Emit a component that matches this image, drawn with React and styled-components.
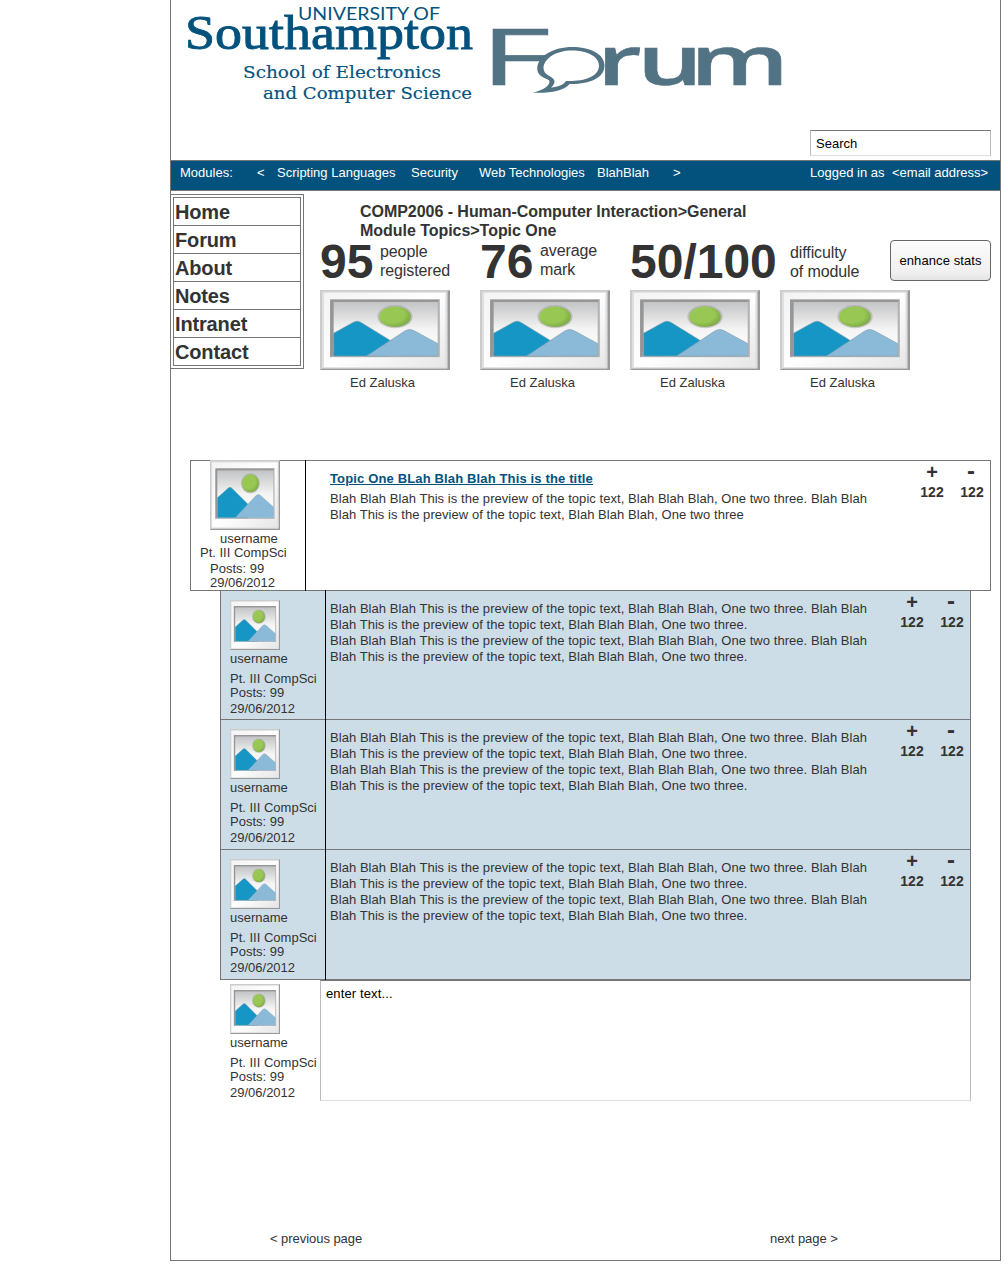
import React from 'react';
import styled, { createGlobalStyle } from 'styled-components';

const GlobalStyle = createGlobalStyle`
  * { box-sizing: border-box; }
  body {
    margin: 0;
    background: #fff;
    color: #333;
    font: 13px/16px "Liberation Sans", Arial, sans-serif;
  }
`;

const LINE = '#767676';
const NAVY = '#03527d';

const Page = styled.div`
  margin-left: 170px;
  width: 831px;
  height: 1261px;
  border: 1px solid ${LINE};
  border-top: 0;
  display: flex;
  flex-direction: column;
`;

const Header = styled.header`
  height: 160px;
  display: flex;
  justify-content: space-between;
  padding-right: 9px;
`;

const Brand = styled.svg`
  display: block;
  width: 630px;
  height: 110px;
`;

const SearchBox = styled.input`
  align-self: flex-end;
  margin-bottom: 4px;
  width: 181px;
  height: 26px;
  padding: 1px 5px 0;
  border: 1px solid #bbb;
  border-top-color: ${LINE};
  border-bottom-color: #ddd;
  background: #fff;
  color: #000;
  font: inherit;
  outline: 0;
  &::placeholder { color: #000; opacity: 1; }
`;

const ModuleBar = styled.nav`
  height: 31px;
  border: solid ${LINE};
  border-width: 1px 0;
  background: ${NAVY};
  color: #fff;
  display: grid;
  grid-template-columns: 77px 20px 134px 68px 118px 76px 137px 82px 1fr;
  padding: 4px 0 0 9px;
  white-space: nowrap;
`;

const Intro = styled.section`
  display: flex;
  height: 269px;
`;

const Menu = styled.div`
  margin: 3px 0 0 -1px;
  width: 134px;
  height: 175px;
  border: 1px solid ${LINE};
  padding: 2px;
`;

const MenuList = styled.ul`
  list-style: none;
  margin: 0;
  padding: 0;
  width: 128px;
  border: 1px solid ${LINE};
`;

const MenuItem = styled.li`
  height: 28px;
  padding-left: 1px;
  border-bottom: 1px solid ${LINE};
  font-size: 20px;
  line-height: 28px;
  font-weight: bold;
  letter-spacing: -0.15px;
  &:last-child { border-bottom: 0; height: 27px; }
`;

const Overview = styled.div`
  margin-left: 16px;
  width: 671px;
`;

const Heading = styled.h1`
  margin: 11px 0 0 40px;
  width: 400px;
  height: 38px;
  font-size: 16px;
  line-height: 19px;
  letter-spacing: -0.04px;
`;

const Stats = styled.div`
  display: grid;
  grid-template-columns: 60px 100px 60px 90px 160px 100px 101px;
  height: 50px;
`;

const Figure = styled.strong`
  font-size: 48px;
  line-height: 44px;
`;

const FigureLabel = styled.span`
  font-size: 16px;
  line-height: 19px;
  letter-spacing: -0.1px;
  padding-top: ${(p) => p.$drop || 0}px;
`;

const StatsButton = styled.button`
  width: 101px;
  height: 41px;
  padding: 0;
  border: 1px solid #666;
  border-radius: 4px;
  background: linear-gradient(#fcfcfc, #f0f0f0 80%, #e4e4e4);
  color: #000;
  font: inherit;
  letter-spacing: 0.08px;
`;

const Staff = styled.div`
  display: grid;
  grid-template-columns: 160px 150px 150px 130px;
`;

const StaffCard = styled.figure`
  margin: 0;
  figcaption { padding: 5px 0 0 30px; }
`;

const Frame = styled.svg`
  display: block;
  width: ${(p) => p.$w}px;
  height: ${(p) => p.$h}px;
`;

const Topic = styled.article`
  margin-left: 19px;
  width: 801px;
  height: 131px;
  border: 1px solid ${LINE};
  display: flex;
`;

const TopicAuthor = styled.div`
  width: 115px;
  margin: -1px 0;
  border-right: 1px solid #000;
  padding-left: 19px;
`;

const Reply = styled.article`
  margin-left: 49px;
  width: 751px;
  height: ${(p) => p.$h}px;
  border: 1px solid ${LINE};
  border-top: 0;
  background: #ccdde7;
  display: flex;
`;

const ReplyAuthor = styled.div`
  width: 105px;
  margin: -1px 0;
  border-right: 1px solid #000;
  padding: 10px 0 0 9px;
`;

const Line = styled.div`
  height: ${(p) => p.$h || 14}px;
  line-height: ${(p) => p.$h || 14}px;
  margin-top: ${(p) => p.$top || 0}px;
  margin-left: ${(p) => p.$left || 0}px;
  white-space: nowrap;
`;

const Content = styled.div`
  width: ${(p) => p.$w}px;
  padding: ${(p) => p.$top}px 0 0 ${(p) => p.$left}px;
`;

const Title = styled.a`
  display: block;
  margin-bottom: 4px;
  color: ${NAVY};
  font-weight: bold;
  letter-spacing: 0.145px;
  text-decoration: underline;
`;

const Text = styled.div`
  letter-spacing: 0.05px;
  white-space: nowrap;
`;

const Votes = styled.div`
  display: flex;
  gap: 16px;
  padding-top: 1px;
  font-weight: bold;
  font-size: 14px;
`;

const Vote = styled.div`
  width: 24px;
  text-align: center;
`;

const VoteSign = styled.div`
  height: 22px;
  line-height: ${(p) => p.$line}px;
  font-size: ${(p) => p.$size}px;
  text-indent: ${(p) => p.$indent || 0}px;
`;

const Compose = styled.div`
  display: flex;
  margin-left: 59px;
`;

const ComposeAuthor = styled.div`
  width: 90px;
  padding-top: 4px;
`;

const Editor = styled.textarea`
  width: 651px;
  height: 121px;
  padding: 5px;
  border: 1px solid #bbb;
  border-top-color: ${LINE};
  border-bottom-color: #ddd;
  color: #000;
  background: #fff;
  font: inherit;
  letter-spacing: 0.13px;
  resize: none;
  outline: 0;
  &::placeholder { color: #000; opacity: 1; }
`;

const Pager = styled.footer`
  display: grid;
  grid-template-columns: 500px 200px;
  margin: auto 0 13px 99px;
  letter-spacing: -0.05px;
`;

function Picture({ w, h }) {
  return (
    <Frame $w={w} $h={h} viewBox="0 0 100 100" preserveAspectRatio="none" aria-hidden="true">
      <defs>
        <linearGradient id="sky" x2="0" y2="1">
          <stop offset="0" stopColor="#c3c4c6" />
          <stop offset=".5" stopColor="#f4f4f4" />
          <stop offset="1" stopColor="#fff" />
        </linearGradient>
        <linearGradient id="mat" x2="1" y2="1">
          <stop offset="0" stopColor="#f3f3f3" />
          <stop offset=".5" stopColor="#fff" />
          <stop offset="1" stopColor="#e6e6e6" />
        </linearGradient>
        <radialGradient id="sun" cx=".4" cy=".4" r=".65">
          <stop offset=".6" stopColor="#98c853" />
          <stop offset="1" stopColor="#7da648" />
        </radialGradient>
      </defs>
      <rect width="100" height="100" fill="#cbcbcb" />
      <path d="M100 0V100H0L2 98H98V2Z" fill="#999" />
      <rect x="1.5" y="2" width="96.5" height="96" fill="#dedede" />
      <rect x="3" y="3.5" width="93.5" height="93" fill="url(#mat)" />
      <rect x="7.8" y="12" width="84.4" height="72" fill="#b4b4b4" />
      <path d="M7.8 84V12H92.2L90 15.5H11V81Z" fill="#969696" />
      <rect x="10.5" y="15" width="80" height="67.5" fill="url(#sky)" />
      <ellipse cx="57.7" cy="33.3" rx="13.6" ry="14.5" fill="#999" opacity=".45" />
      <ellipse cx="57.7" cy="33.3" rx="12.2" ry="12.8" fill="url(#sun)" />
      <path d="M10.5 54L25 41Q28.5 37 32 41L54 63V82.5H10.5Z" fill="#1596c4" stroke="#7c9aa7" strokeWidth=".6" />
      <path d="M36 82.5L65.5 51Q69 47.5 72.5 51L90.5 67V82.5Z" fill="#8bbad8" stroke="#8ba5b5" strokeWidth=".7" />
    </Frame>
  );
}

function Logos() {
  return (
    <Brand viewBox="171 0 630 110" role="img" aria-label="University of Southampton Forum">
      <g fill={NAVY}>
        <text x="298" y="19.5" fontFamily="Lato, sans-serif" fontSize="17" textLength="142" lengthAdjust="spacingAndGlyphs">UNIVERSITY OF</text>
        <text x="185" y="48.5" fontFamily="Liberation Serif, serif" fontSize="49" stroke={NAVY} strokeWidth="0.9" textLength="288" lengthAdjust="spacingAndGlyphs">Southampton</text>
        <g fontFamily="DejaVu Serif, serif" fontSize="17.5" stroke={NAVY} strokeWidth="0.15">
          <text x="243" y="77.5" textLength="198" lengthAdjust="spacingAndGlyphs">School of Electronics</text>
          <text x="263" y="98.5" textLength="209" lengthAdjust="spacingAndGlyphs">and Computer Science</text>
        </g>
      </g>
      <g fill="#527384" stroke="#527384" fontFamily="Open Sans, sans-serif">
        <text transform="translate(480 85) scale(1.75 1)" fontSize="78" strokeWidth="0.7">F</text>
        <text transform="translate(597 84.5) scale(1.5 1)" x="0 26.7 62.2" fontSize="69" fontWeight="600" strokeWidth="0.5">rum</text>
      </g>
      <path
        d="M532.5 92.7C543 90 550 86 549.5 81C548 78 537.5 78 537.3 68.5C537.5 56 554 47 572 47C590 47 604.5 54 604.5 65.5C604.5 78 589 84.5 569.5 84C564 91 549 93.5 532.5 92.7Z"
        fill="#527384"
      />
      <path
        d="M551 87.5C558 87 563 85 566 81C584 81.5 599 77 599 65.5C599 56 586 50.5 572 50.5C556 50.5 543.5 58.5 543.5 68.5C544 76 553.5 76 554.5 81C554.5 84 553 86 551 87.5Z"
        fill="#fff"
      />
    </Brand>
  );
}

function VotePair() {
  return (
    <Votes>
      <Vote>
        <VoteSign $size={20} $line={21}>+</VoteSign>
        122
      </Vote>
      <Vote>
        <VoteSign $size={24} $line={17} $indent={-2}>-</VoteSign>
        122
      </Vote>
    </Votes>
  );
}

function AuthorLines() {
  return (
    <>
      <Picture w={50} h={50} />
      <Line $h={16} $top={1}>username</Line>
      <Line $top={5}>Pt. III CompSci</Line>
      <Line>Posts: 99</Line>
      <Line $top={2}>29/06/2012</Line>
    </>
  );
}

const PREVIEW_START = 'Blah Blah Blah This is the preview of the topic text, Blah Blah Blah, One two three. Blah Blah';
const PREVIEW_END = 'Blah This is the preview of the topic text, Blah Blah Blah, One two three';

export default function App() {
  return (
    <>
      <GlobalStyle />
      <Page>
        <Header>
          <Logos />
          <SearchBox placeholder="Search" />
        </Header>
        <ModuleBar>
          <span>Modules:</span>
          <span>&lt;</span>
          <span>Scripting Languages</span>
          <span>Security</span>
          <span>Web Technologies</span>
          <span>BlahBlah</span>
          <span>&gt;</span>
          <span>Logged in as</span>
          <span>&lt;email address&gt;</span>
        </ModuleBar>
        <Intro>
          <Menu>
            <MenuList>
              {['Home', 'Forum', 'About', 'Notes', 'Intranet', 'Contact'].map((item) => (
                <MenuItem key={item}>{item}</MenuItem>
              ))}
            </MenuList>
          </Menu>
          <Overview>
            <Heading>COMP2006 - Human-Computer Interaction&gt;General Module Topics&gt;Topic One</Heading>
            <Stats>
              <Figure>95</Figure>
              <FigureLabel $drop={2}>people<br />registered</FigureLabel>
              <Figure>76</Figure>
              <FigureLabel $drop={1}>average<br />mark</FigureLabel>
              <Figure>50/100</Figure>
              <FigureLabel $drop={3}>difficulty<br />of module</FigureLabel>
              <StatsButton>enhance stats</StatsButton>
            </Stats>
            <Staff>
              {[0, 1, 2, 3].map((n) => (
                <StaffCard key={n}>
                  <Picture w={130} h={80} />
                  <figcaption>Ed Zaluska</figcaption>
                </StaffCard>
              ))}
            </Staff>
          </Overview>
        </Intro>
        <Topic>
          <TopicAuthor>
            <Picture w={70} h={70} />
            <Line $top={2} $left={10}>username</Line>
            <Line $left={-10}>Pt. III CompSci</Line>
            <Line $top={2}>Posts: 99</Line>
            <Line>29/06/2012</Line>
          </TopicAuthor>
          <Content $w={614} $top={10} $left={24}>
            <Title>Topic One BLah Blah Blah This is the title</Title>
            <Text>{PREVIEW_START}<br />{PREVIEW_END}</Text>
          </Content>
          <VotePair />
        </Topic>
        {[129, 130, 130].map((h, n) => (
          <Reply key={n} $h={h}>
            <ReplyAuthor><AuthorLines /></ReplyAuthor>
            <Content $w={574} $top={10} $left={4}>
              <Text>
                {PREVIEW_START}<br />{PREVIEW_END}.<br />
                {PREVIEW_START}<br />{PREVIEW_END}.
              </Text>
            </Content>
            <VotePair />
          </Reply>
        ))}
        <Compose>
          <ComposeAuthor><AuthorLines /></ComposeAuthor>
          <Editor placeholder="enter text..." />
        </Compose>
        <Pager>
          <span>&lt; previous page</span>
          <span>next page &gt;</span>
        </Pager>
      </Page>
    </>
  );
}
